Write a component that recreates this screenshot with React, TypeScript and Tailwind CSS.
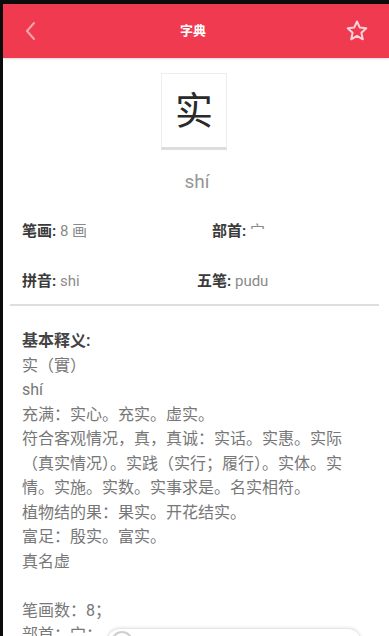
import React from "react";

const font = { fontFamily: 'Roboto, "Noto Sans CJK SC", "Noto Sans", sans-serif' };

export default function App() {
  const lines = [
    "实（實）",
    "shí",
    "充满：实心。充实。虚实。",
    "符合客观情况，真，真诚：实话。实惠。实际（真实情况）。实践（实行；履行）。实体。实情。实施。实数。实事求是。名实相符。",
    "植物结的果：果实。开花结实。",
    "富足：殷实。富实。",
    "真名虚",
  ];
  return (
    <div
      className="relative w-[389px] h-[636px] overflow-hidden bg-[#0b0b0b] pl-[3px] pt-[4px] flex flex-col"
      style={font}
    >
      <div className="flex-1 bg-white flex flex-col">
        <div className="h-[54px] bg-[#f03a50] flex items-center justify-between pl-[20px] pr-[20px] shadow-[0_1px_2px_rgba(0,0,0,0.15)]">
          <svg width="14" height="22" viewBox="0 0 14 22" fill="none">
            <path d="M11 3 L4 11 L11 19" stroke="#f7a3ae" strokeWidth="2" strokeLinecap="round" strokeLinejoin="round" />
          </svg>
          <span className="text-white font-bold text-[13px] ml-[4px]">字典</span>
          <svg width="24" height="24" viewBox="0 0 24 24" fill="none">
            <path
              d="M12 2.5 L14.8 8.6 L21.3 9.3 L16.4 13.7 L17.8 20.3 L12 16.9 L6.2 20.3 L7.6 13.7 L2.7 9.3 L9.2 8.6 Z"
              stroke="#fbd3d9"
              strokeWidth="2"
              strokeLinejoin="round"
            />
          </svg>
        </div>

        <div className="mt-[15px] w-[66px] h-[77px] border border-[#f3eaea] border-b-[3px] border-b-[#dddddd] flex items-center justify-center ml-[158px]">
          <span className="text-[38px] leading-none text-[#2a2a2a]">实</span>
        </div>

        <div className="text-center text-[19px] leading-[24px] text-[#959595] mt-[20px] pl-[2px]">shí</div>

        <div className="flex items-center mt-[25px] h-[24px] text-[15px]">
          <div className="w-[209px] pl-[19px]">
            <span className="font-bold text-[#3a3a3a]">笔画:</span>
            <span className="text-[#8a8a8a]"> 8 画</span>
          </div>
          <div>
            <span className="font-bold text-[#3a3a3a]">部首:</span>
            <span className="text-[#8a8a8a]"> 宀</span>
          </div>
        </div>
        <div className="flex items-center mt-[26px] h-[24px] text-[15px]">
          <div className="w-[194px] pl-[19px]">
            <span className="font-bold text-[#3a3a3a]">拼音:</span>
            <span className="text-[#8a8a8a]"> shi</span>
          </div>
          <div>
            <span className="font-bold text-[#3a3a3a]">五笔:</span>
            <span className="text-[#8a8a8a]"> pudu</span>
          </div>
        </div>

        <div className="mt-[11px] ml-[7px] mr-[10px] h-[2px] bg-[#dedede]"></div>

        <div className="mt-[23px] pl-[19px] pr-[21px] text-[16px] leading-[24.5px] text-[#777777]">
          <div className="font-bold text-[#444444]">基本释义:</div>
          {lines.map((l, i) => (
            <div key={i}>{l}</div>
          ))}
          <div className="h-[24.5px]"></div>
          <div>笔画数：8；</div>
          <div>部首：宀；</div>
        </div>
      </div>
      <div className="absolute left-[106px] top-[628px] w-[256px] h-[30px] rounded-[14px] bg-white border border-[#e6e6e6] shadow-[0_-1px_3px_rgba(0,0,0,0.08)]">
        <div className="absolute left-[4px] top-[2px] w-[22px] h-[22px] rounded-full border-2 border-[#cfcfcf]"></div>
      </div>
    </div>
  );
}
